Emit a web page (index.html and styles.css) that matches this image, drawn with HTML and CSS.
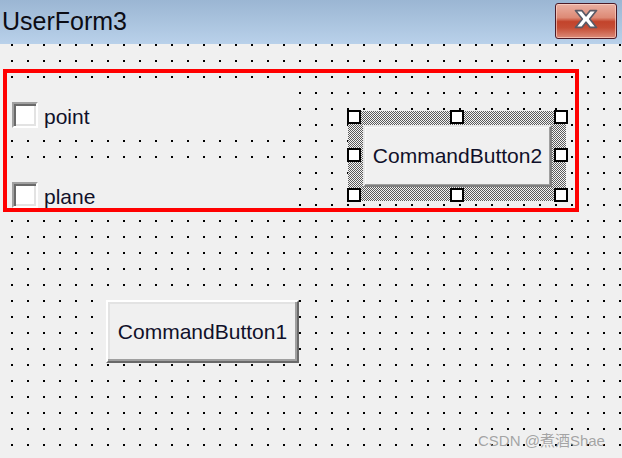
FILE: index.html
```html
<!DOCTYPE html>
<html>
<head>
<meta charset="utf-8">
<link rel="stylesheet" href="styles.css">
</head>
<body>
<div class="form">
  <div class="titlebar">
    <span class="title">UserForm3</span>
    <div class="close">
      <svg width="24" height="19" viewBox="0 0 24 19">
        <path d="M2 1.5 H8 L12 6.5 L16 1.5 H22 L15.5 9.5 L22 17.5 H16 L12 12.5 L8 17.5 H2 L8.5 9.5 Z" fill="#fff" stroke="#5a5a66" stroke-width="1.6" stroke-linejoin="round"/>
      </svg>
    </div>
  </div>
  <div class="canvas">
    <div class="check check-1">
      <span class="box"></span><span class="label">point</span>
    </div>
    <div class="check check-2">
      <span class="box"></span><span class="label">plane</span>
    </div>
    <div class="selection">
      <div class="btn btn-2">CommandButton2</div>
      <span class="handle h-tl"></span>
      <span class="handle h-tm"></span>
      <span class="handle h-tr"></span>
      <span class="handle h-ml"></span>
      <span class="handle h-mr"></span>
      <span class="handle h-bl"></span>
      <span class="handle h-bm"></span>
      <span class="handle h-br"></span>
    </div>
    <div class="btn btn-1">CommandButton1</div>
    <div class="highlight"></div>
    <div class="watermark">CSDN @煮酒Shae</div>
  </div>
</div>
</body>
</html>
```
FILE: styles.css
```css
html, body {
  margin: 0;
  padding: 0;
  background: #f0f0f0;
}
.form {
  width: 622px;
  height: 458px;
  display: flex;
  flex-direction: column;
  overflow: hidden;
  font-family: "Liberation Sans", Arial, sans-serif;
  color: #000;
}
.titlebar {
  height: 44px;
  flex: none;
  display: flex;
  align-items: flex-start;
  justify-content: space-between;
  background: linear-gradient(#9bb6d3, #b9d1ea);
}
.title {
  font-size: 25px;
  line-height: 25px;
  margin: 9px 0 0 2px;
  color: #0c0c14;
}
.close {
  width: 60px;
  margin: 3px 5px 0 0;
  border: 1px solid #4c1a26;
  border-radius: 3px;
  display: flex;
  align-items: center;
  justify-content: center;
  padding-bottom: 4px;
  box-sizing: content-box;
  height: 30px;
  background: linear-gradient(#eab0a2 0%, #dd8a76 40%, #c2432b 52%, #c54d35 70%, #dc8b7a 100%);
  box-shadow: inset 0 0 0 1px rgba(255,220,210,0.6);
}
.close svg {
  width: 26px;
  height: 20px;
}
.canvas {
  flex: 1;
  position: relative;
  background-color: #000;
  background-image:
    linear-gradient(90deg, transparent 2px, #f0f0f0 2px),
    linear-gradient(transparent 2px, #f0f0f0 2px);
  background-size: 16px 16px;
  background-position: 11px 0;
}
.check {
  position: absolute;
  left: 8px;
  width: 283px;
  height: 50px;
  background: #f0f0f0;
  display: flex;
  align-items: center;
  gap: 6px;
  padding-left: 4px;
  box-sizing: border-box;
  font-size: 21px;
}
.check-1 { top: 46px; }
.check-2 { top: 126px; }
.box {
  width: 26px;
  height: 26px;
  box-sizing: border-box;
  background: #fff;
  border: 2px solid;
  border-color: #a0a0a0 #fff #fff #a0a0a0;
  box-shadow: inset 2px 2px 0 #696969, inset -2px -2px 0 #e3e3e3;
  flex: none;
}
.label {
  margin-top: 3px;
  color: #10102a;
}
.btn {
  position: absolute;
  box-sizing: border-box;
  background: #f0f0f0;
  border: 2px solid;
  border-color: #fff #696969 #696969 #fff;
  box-shadow: inset -2px -2px 0 #a0a0a0, inset 2px 2px 0 #e3e3e3;
  display: flex;
  align-items: center;
  justify-content: center;
  font-size: 21px;
  color: #10102a;
}
.btn-1 {
  left: 106px;
  top: 256px;
  width: 193px;
  height: 63px;
}
.selection {
  position: absolute;
  left: 348px;
  top: 67px;
  width: 218px;
  height: 90px;
  background: repeating-conic-gradient(#5a5a5a 0 25%, #f4f4f4 0 50%) 0 0 / 2px 2px;
}
.btn-2 {
  left: 15px;
  top: 14px;
  width: 189px;
  height: 62px;
  border-color: #e8e8e8 #808080 #808080 #e8e8e8;
  box-shadow: inset -1px -1px 0 #a0a0a0, inset 1px 1px 0 #f8f8f8;
}
.handle {
  position: absolute;
  width: 14px;
  height: 14px;
  box-sizing: border-box;
  border: 2px solid #000;
  background: #fff;
}
.h-tl { left: -1px; top: -1px; }
.h-tm { left: 102px; top: -1px; }
.h-tr { left: 206px; top: -1px; }
.h-ml { left: -1px; top: 37px; }
.h-mr { left: 206px; top: 37px; }
.h-bl { left: -1px; top: 77px; }
.h-bm { left: 102px; top: 77px; }
.h-br { left: 206px; top: 77px; }
.highlight {
  position: absolute;
  left: 3px;
  top: 25px;
  width: 576px;
  height: 143px;
  box-sizing: border-box;
  border: 4px solid #ff0000;
}
.watermark {
  position: absolute;
  left: 478px;
  top: 385px;
  font-size: 15px;
  color: rgba(150,150,150,0.85);
  font-family: "Liberation Sans", "Noto Sans CJK SC", sans-serif;
}
```
